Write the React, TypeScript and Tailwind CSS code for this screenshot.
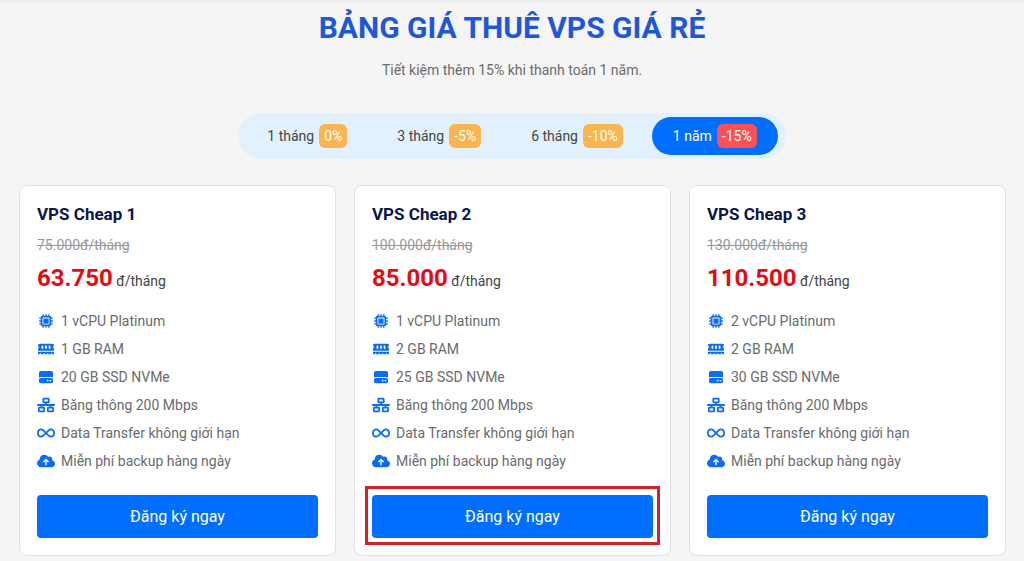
import { useState } from "react";
import clsx from "clsx";
import {
  FaCloudArrowUp,
  FaHardDrive,
  FaInfinity,
  FaMemory,
  FaMicrochip,
  FaNetworkWired,
} from "react-icons/fa6";

const periods = [
  { id: "1m", label: "1 tháng", discount: "0%" },
  { id: "3m", label: "3 tháng", discount: "-5%" },
  { id: "6m", label: "6 tháng", discount: "-10%" },
  { id: "1y", label: "1 năm", discount: "-15%" },
];

type Plan = {
  name: string;
  oldPrice: string;
  price: string;
  cpu: string;
  ram: string;
  disk: string;
  highlighted?: boolean;
};

const plans: Plan[] = [
  {
    name: "VPS Cheap 1",
    oldPrice: "75.000",
    price: "63.750",
    cpu: "1 vCPU Platinum",
    ram: "1 GB RAM",
    disk: "20 GB SSD NVMe",
  },
  {
    name: "VPS Cheap 2",
    oldPrice: "100.000",
    price: "85.000",
    cpu: "1 vCPU Platinum",
    ram: "2 GB RAM",
    disk: "25 GB SSD NVMe",
    highlighted: true,
  },
  {
    name: "VPS Cheap 3",
    oldPrice: "130.000",
    price: "110.500",
    cpu: "2 vCPU Platinum",
    ram: "2 GB RAM",
    disk: "30 GB SSD NVMe",
  },
];

const PlanCard = ({ plan }: { plan: Plan }) => {
  // the wide glyphs need a bigger box to come out at the same height
  const features = [
    { Icon: FaMicrochip, size: "size-3.5", text: plan.cpu },
    { Icon: FaMemory, size: "size-4", text: plan.ram },
    { Icon: FaHardDrive, size: "size-3.5", text: plan.disk },
    { Icon: FaNetworkWired, size: "size-[18px]", text: "Băng thông 200 Mbps" },
    { Icon: FaInfinity, size: "size-[18px]", text: "Data Transfer không giới hạn" },
    { Icon: FaCloudArrowUp, size: "size-[18px]", text: "Miễn phí backup hàng ngày" },
  ];

  return (
    <article className="rounded-lg border border-[#e2e2e2] bg-white px-[17px] pt-4 pb-[17px]">
      <h2 className="text-[17px] leading-6 font-bold text-[#07164c]">{plan.name}</h2>
      <p className="mt-[9px] text-sm leading-5 text-[#999] line-through">
        {plan.oldPrice}đ/tháng
      </p>
      <p className="mt-[7px] text-sm leading-8 text-[#444]">
        <span className="text-2xl leading-8 font-bold text-[#e60b12]">{plan.price}</span>{" "}
        đ/tháng
      </p>
      <ul className="mt-2.5 text-sm leading-7 text-[#6b6b6b]">
        {features.map(({ Icon, size, text }) => (
          <li key={text} className="flex items-center gap-1.5">
            <span className="flex w-[18px] justify-center text-[#0b6cf5]">
              <Icon className={size} />
            </span>
            {text}
          </li>
        ))}
      </ul>
      <div className="relative mt-5">
        <button
          type="button"
          className="h-[43px] w-full rounded-sm bg-[#006eff] text-base text-white"
        >
          Đăng ký ngay
        </button>
        {plan.highlighted && (
          <div className="pointer-events-none absolute -inset-x-[7px] -top-[9px] -bottom-[7px] border-3 border-[#cf2429]" />
        )}
      </div>
    </article>
  );
};

const App = () => {
  const [period, setPeriod] = useState("1y");

  return (
    <main className="min-h-screen bg-[#f5f5f5] font-['Roboto','Liberation_Sans',sans-serif]">
      <div className="h-1 bg-linear-to-b from-[#e9e9e9] to-[#f5f5f5]" />
      <header className="pt-1 text-center">
        <h1 className="text-[30px] leading-10 font-bold text-[#1f57db]">
          BẢNG GIÁ THUÊ VPS GIÁ RẺ
        </h1>
        <p className="mt-3 text-sm leading-5 text-[#6b6b6b]">
          Tiết kiệm thêm 15% khi thanh toán 1 năm.
        </p>
      </header>

      <div className="mt-[33px] flex justify-center">
        <div className="flex gap-2 rounded-full bg-[#e3f1fe] px-2 py-1">
          {periods.map((item) => (
            <button
              key={item.id}
              type="button"
              aria-pressed={period === item.id}
              onClick={() => setPeriod(item.id)}
              className={clsx(
                "flex h-[38px] items-center gap-[5px] rounded-full px-[21px] text-sm",
                period === item.id ? "bg-[#006eff] text-white" : "text-[#444]"
              )}
            >
              {item.label}
              <span
                className={clsx(
                  "rounded-md px-[5px] leading-6 text-white",
                  period === item.id ? "bg-[#fb5058]" : "bg-[#fbb44e]"
                )}
              >
                {item.discount}
              </span>
            </button>
          ))}
        </div>
      </div>

      <section className="mt-[26px] grid grid-cols-3 gap-[18px] pr-[18px] pl-[19px]">
        {plans.map((plan) => (
          <PlanCard key={plan.name} plan={plan} />
        ))}
      </section>
    </main>
  );
};
export default App;
